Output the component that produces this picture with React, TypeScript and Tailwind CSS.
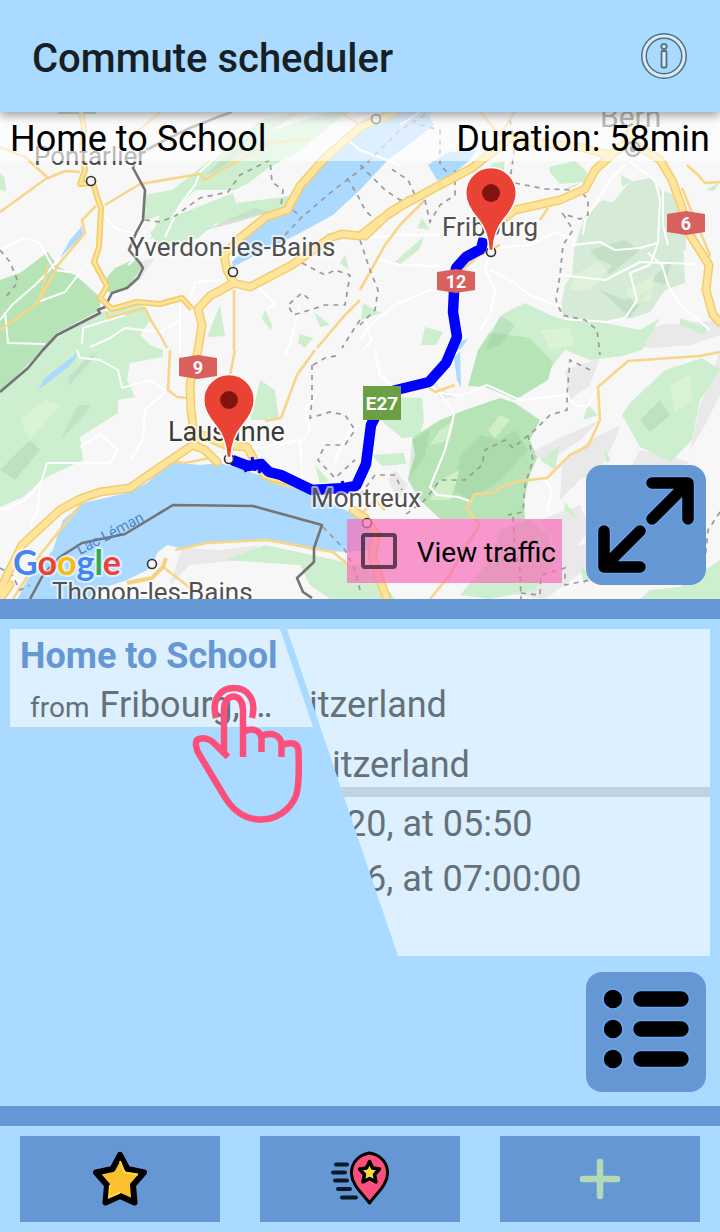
import React from "react";

const halo = {
  paintOrder: "stroke" as const,
  stroke: "#ffffff",
  strokeOpacity: 0.6,
  strokeWidth: 4,
  strokeLinejoin: "round" as const,
};

const DARK_WOODS = [
  "M0 280L20 273L48 252L58 267L75 275L100 297L100 310L57 333L43 350L0 392Z",
  "M103 282L115 268L137 258L142 267L127 288L110 293L106 290Z",
  "M490 332L530 338L553 362L548 380L515 400L505 395L485 387L468 386L478 350Z",
  "M412 438L440 420L465 410L500 398L515 403L540 420L530 440L537 458L530 475L524 500L525 519L440 519L420 500L408 480L415 455Z",
  "M562 190L580 183L575 186Z",
];

const LIGHT_WOODS = [
  "M100 312L112 310L140 300L150 320L140 335L150 345L163 350L163 357L130 363L127 380L135 397L118 400L118 413L80 437L83 460L47 477L23 497L0 507L0 393L43 352L60 335Z",
  "M143 195L172 190L195 172L210 160L250 138L290 125L330 112L350 112L325 130L298 152L268 168L250 182L235 190L195 190L180 205L165 225L150 240L160 215L142 222Z",
  "M150 232L170 218L200 206L233 193L236 203L290 196L285 208L250 216L215 224L198 238L160 250Z",
  "M240 135L262 120L300 112L280 125L262 140L225 165L195 175Z",
  "M0 173L5 178L6 192L0 189Z",
  "M265 310L272 325L271 331L262 318Z",
  "M220 305L225 336L207 337Z",
  "M314 312L330 325L320 327Z",
  "M300 334L313 338L305 348L298 343Z",
  "M260 380L275 390L279 420L250 420L255 402Z",
  "M345 255L349 270L340 263Z",
  "M395 262L424 236L419 250L400 264Z",
  "M422 218L430 230L417 228Z",
  "M492 163L505 162L505 172L488 173Z",
  "M549 167L575 161L587 172L585 182L560 184L550 172Z",
  "M621 175L632 181L622 187Z",
  "M706 190L720 182L714 191Z",
  "M363 303L381 313L361 320Z",
  "M425 327L443 332L436 345L421 345Z",
  "M490 332L503 314L525 303L550 315L565 320L600 322L640 330L660 318L642 350L623 356L590 360L565 350L545 375L525 378Z",
  "M397 397L422 398L424 420L420 436L402 438L381 420Z",
  "M372 455L404 453L406 464L382 466Z",
  "M630 403L665 370L702 358L720 370L700 400L692 440L671 462L640 447L622 415Z",
  "M315 465L330 482L320 483Z",
  "M335 560L372 570L395 599L330 599L310 585L300 565L225 560L265 545Z",
  "M565 502L578 519L564 510Z",
  "M540 460L560 445L555 470Z",
  "M588 405L598 415L583 420Z",
  "M580 565L590 575L584 585Z",
  "M650 590L680 587L720 560L720 599L640 599Z",
  "M604 448L611 460L606 463Z",
  "M680 318L706 328L705 335L680 325Z",
  "M530 519L548 535L555 560L535 590L490 599L460 595L490 560L500 530Z",
];

const RESERVES = [
  "M602 200L613 202L630 182L650 178L665 195L668 225L683 240L685 283L665 290L650 312L632 318L605 322L568 319L560 310L565 285L572 275L574 250L584 218Z",
  "M662 190L674 195L686 220L686 250L668 245Z",
];

const SHADOWS = [
  "M60 440L85 415L90 405L78 405Z",
  "M70 385L100 350L85 360L68 378Z",
  "M205 230L255 208L270 212L230 224Z",
  "M205 175L250 135L240 155L215 172Z",
  "M620 345L660 325L720 320L720 335L690 345L655 348Z",
  "M590 440L620 425L615 440L600 470L580 480L560 500L562 465Z",
  "M690 450L705 425L720 395L720 350L712 375L700 405Z",
  "M525 455L560 438L600 420L580 440L550 460Z",
  "M565 370L600 358L590 385L570 400Z",
  "M485 590L520 560L600 540L585 570L545 599Z",
  "M140 262L155 258L140 280L128 289Z",
  "M182 548L220 550L260 545L240 560L190 565L170 585Z",
  "M395 470L408 485L398 500L388 480Z",
  "M540 520L580 505L590 530L565 560Z",
  "M610 505L640 450L690 462L675 470L600 478Z",
  "M430 375L440 388L455 397L440 399Z",
];

const FACETS_DARK = [
  "M412 440L430 430L425 455L408 480Z",
  "M460 455L480 435L500 440L515 430L528 450L500 480L470 500L455 490Z",
  "M500 315L515 325L500 345L485 350Z",
  "M590 250L625 240L640 250L610 275Z",
  "M600 290L625 300L650 290L630 318Z",
  "M0 470L30 440L40 450L15 480Z",
  "M640 420L660 400L670 415L650 432Z",
  "M650 280L672 260L665 285Z",
];

const FACETS_LIGHT = [
  "M440 430L455 420L450 440L430 445Z",
  "M488 430L500 415L510 420L495 438Z",
  "M575 275L600 260L612 265L590 290L570 290Z",
  "M625 290L655 275L650 300L635 305Z",
  "M670 385L690 375L692 400L675 412Z",
  "M440 480L460 470L450 500L430 500Z",
  "M20 420L45 400L60 405L30 440Z",
  "M540 330L570 328L575 345L550 350Z",
];

const LAKES = [
  "M385 112L427 112L434 125L387 161L360 190L333 215L300 233L260 253L233 267L232 262L247 247L240 238L270 217L290 210L300 187L325 162L360 126Z",
  "M428 165L448 152L477 150L470 160L448 178L437 180Z",
  "M170 462L200 465L220 463L253 473L283 483L310 493L360 517L375 537L370 550L347 552L313 550L267 540L207 543L180 548L167 545L157 553L153 567L127 580L97 590L93 600L17 600L27 580L53 550L57 537L63 520L83 503L127 493L147 483Z",
  "M82 226L83 234L72 246L60 258L70 240Z",
  "M77 353L75 360L67 368L38 390L45 378Z",
  "M453 350L460 350L461 388L457 380Z",
  "M455 348L461 341L468 339L460 350Z",
];

const WHITE_ROADS = [
  "M0 250L25 238L40 243L50 262L55 270L75 273",
  "M0 320L12 305L35 285L45 275L60 258",
  "M5 312L8 343L45 344",
  "M103 213L115 228L135 234L145 250L128 265",
  "M35 303L65 292L82 270",
  "M82 344L83 328L125 315",
  "M90 347L110 338L125 328L160 332L180 320",
  "M165 237L180 205L195 185L200 172L218 155L225 140",
  "M77 350L80 358L100 360L118 370L122 388L150 380L166 391",
  "M166 391L145 410L143 440L130 460",
  "M80 447L100 434L118 450L110 463L47 463L42 480L25 500L5 510L0 508",
  "M40 483L38 510L30 525",
  "M180 305L180 350",
  "M220 280L195 282L190 300",
  "M255 283L275 304L265 310",
  "M360 238L400 235L440 235",
  "M300 305L290 345L285 355",
  "M360 340L370 325L395 305L430 290L450 290",
  "M372 258L400 265L440 266",
  "M490 252L485 270L495 290L490 315L480 330",
  "M497 248L530 245L555 232L575 240",
  "M490 270L510 280L530 295L550 303L562 307",
  "M572 245L600 242L615 250L640 248L658 243L660 200L655 180L630 162",
  "M658 243L650 265L630 273L637 300L625 318L607 322L565 319",
  "M648 253L662 265L668 285L680 305L710 330",
  "M663 190L663 225L668 245",
  "M583 235L585 220L610 180L625 165",
  "M375 350L380 375L395 388",
  "M363 350L372 340L365 320",
  "M432 385L445 400L454 415L445 450L430 487L437 495L458 497L472 502",
  "M437 392L460 396L487 385L520 400L565 395L575 405L587 407L598 388",
  "M545 480L552 490L547 512",
  "M460 350L450 360",
  "M300 445L310 430L305 410L320 390",
  "M230 445L260 448L300 440L303 490",
  "M335 460L350 430L360 425",
  "M505 112L508 140L505 170",
  "M400 125L420 112",
  "M560 275L605 280L640 262L695 264",
  "M330 125L360 150L400 165",
];

const MINOR_ROADS = [
  "M0 147L25 157L48 178L65 171L80 172",
  "M0 212L47 178",
  "M105 205L140 184L200 174L205 180L230 165L258 150L270 143L310 138",
  "M96 206L82 220L85 233L58 265L38 303L0 330",
  "M48 265L40 300L35 303",
  "M106 312L108 318L145 308L152 322L160 335L167 348",
  "M234 290L234 350",
  "M360 300L345 315L317 348",
  "M315 350L297 375L281 418L265 421",
  "M170 350L168 390L177 397L188 398",
  "M235 350L230 375",
  "M360 290L385 245L400 225L425 200",
  "M500 245L480 255L462 270",
  "M548 208L540 220",
  "M687 165L698 175L705 183L720 182",
  "M682 188L695 220L710 255L705 262",
  "M720 352L700 356L628 361L598 387L600 420L588 446L570 455L547 478L520 481L503 486L493 493L475 494L466 508L480 525",
  "M480 525L470 540L463 550L450 575L430 599",
  "M360 515L375 500L385 510",
  "M170 461L185 463L210 458",
  "M13 599L25 580L40 555L85 499",
  "M163 567L180 580L195 592",
  "M175 550L207 543L267 540L333 552L345 562L355 575",
  "M127 140L145 125L160 112",
  "M340 112L360 125",
  "M480 112L500 135L515 112",
  "M270 482L300 488L330 498",
  "M455 385L435 392L429 388",
];

const MAJOR_ROADS = [
  "M81 112L84 128L82 150L85 170L80 184L93 183L97 197L101 208L99 247L94 262L107 286L100 298L112 309L137 302L160 304L182 298L192 309",
  "M395 112L360 127L325 158L300 186L287 210L266 217L240 238",
  "M240 238L224 255L227 270L234 283L250 287L292 265L330 238L342 234L360 236L380 220L403 205L440 185L472 168L495 150L510 138L530 142L580 147L610 155L627 142L635 118",
  "M234 283L210 296L198 309L202 325L198 350L190 385L191 410L195 441",
  "M365 236L390 212L410 200",
  "M495 225L515 210L560 200L585 189L595 170L617 150L632 142L660 160L672 180L681 205L690 235L709 265L706 290L713 315L720 322",
  "M0 590L22 545L60 510L80 499L100 492L130 488L160 467L193 445L205 450L217 462",
  "M200 434L225 445L247 447L256 463L265 475L283 480",
  "M353 510L365 518L377 535L372 555L380 580L387 599",
  "M0 599L10 585",
];

const BORDERS = [
  "M232 112L218 117L190 128L165 140L137 155L133 168L145 190L143 220L136 233L129 250L140 263L143 268L138 278L127 288L112 293L105 307L98 310L100 313L57 335L43 350L28 368L0 392",
  "M30 599L43 575L60 557L82 543L125 534L173 505L253 506L322 525L314 548L314 562L297 578L303 592L312 598",
];

const DASHES = [
  "M145 220L160 222L175 216L200 198L228 192L240 175L270 160L272 182L283 190L281 206L290 208L302 217",
  "M285 235L302 217L330 193L360 170L400 130L430 112",
  "M347 178L357 194L365 210L380 225",
  "M0 250L10 262L18 282L5 298",
  "M302 263L325 275L335 270L350 275L345 305L325 305L310 310L293 315L288 305L302 293L310 300",
  "M360 320L350 335L342 348",
  "M360 165L385 190L400 200L415 195L408 180L390 168",
  "M425 200L430 222L440 205L455 195L455 165",
  "M360 240L370 270L378 290L375 310L360 325",
  "M420 125L440 130L440 165L450 175",
  "M515 183L545 189L580 190L588 200L588 215L580 219L563 214L573 230L563 245L560 275L556 300L562 315L585 320L597 330L600 355",
  "M510 120L515 145L510 180",
  "M360 495L375 475L395 475L402 490",
  "M312 365L312 400L310 418L330 412L345 415L355 430L345 445L325 445L318 460L335 478L355 460",
  "M313 365L325 358L340 355",
  "M590 370L570 360L567 395L567 410L550 415L535 430L525 438L513 448L505 440L485 450L482 465L465 480L440 480L425 500L405 515",
  "M528 435L533 460L525 485L523 512L508 515",
  "M513 517L515 550L520 570L521 599",
  "M720 512L708 530L705 560",
  "M521 593L540 595L541 575L565 568L565 585L590 580",
  "M323 527L345 550L355 570L360 590",
  "M0 568L12 575L20 590L30 585",
];

function Paths({ list, ...rest }: { list: string[] } & React.SVGProps<SVGPathElement>) {
  return (
    <>
      {list.map((d) => (
        <path key={d} d={d} {...rest} />
      ))}
    </>
  );
}

function Town({ x, y }: { x: number; y: number }) {
  return <circle cx={x} cy={y} r={4.5} fill="#f4f4f4" stroke="#333" strokeWidth={1.6} />;
}

function Shield({ x, y, label }: { x: number; y: number; label: string }) {
  return (
    <g transform={`translate(${x} ${y})`}>
      <path d="M-19 -9L0 -12L19 -9V9L0 12L-19 9Z" fill="#d9605f" />
      <text y={6.5} textAnchor="middle" fontSize={18} fontWeight={700} fill="#fff">
        {label}
      </text>
    </g>
  );
}

function Pin({ x, y }: { x: number; y: number }) {
  return (
    <g transform={`translate(${x} ${y})`}>
      <path
        d="M0 -25.5A25.300 25.300 0 0 0 -25.300 0C-25.300 10 -20 18 -13.500 25.500C-6 34 -2.600 43 -2 57.500H2C2.600 43 6 34 13.500 25.500C20 18 25.300 10 25.300 0A25.300 25.300 0 0 0 0 -25.500Z"
        fill="#ea4335"
        stroke="#fff"
        strokeWidth={1.5}
      />
      <circle r={9} fill="#811411" />
    </g>
  );
}

function RouteMap() {
  return (
    <svg
      className="absolute inset-0 h-full w-full"
      viewBox="0 112 720 487"
      preserveAspectRatio="xMidYMid slice"
      fontFamily="Roboto, sans-serif"
      fill="none"
      role="img"
      aria-label="Map"
    >
      <rect y={112} width={720} height={487} fill="#f7f7f7" />
      <Paths list={SHADOWS} fill="#e9e9e9" />
      <Paths list={LIGHT_WOODS} fill="#cdeecf" />
      <Paths list={RESERVES} fill="#d5ebd7" />
      <Paths list={DARK_WOODS} fill="#b6e4b7" />
      <Paths list={SHADOWS.slice(0, 4)} fill="#7f9f85" fillOpacity={0.15} />
      <Paths list={FACETS_DARK} fill="#86b98c" fillOpacity={0.22} />
      <Paths list={FACETS_LIGHT} fill="#e6f7d8" fillOpacity={0.55} />
      <Paths list={LAKES} fill="#acdaff" />
      <rect x={58} y={108} width={38} height={6} fill="#7aa95c" />
      <Paths list={WHITE_ROADS} stroke="#fff" strokeWidth={2} strokeLinejoin="round" />
      <Paths list={MINOR_ROADS} stroke="#f7d68a" strokeWidth={2.6} strokeLinejoin="round" />
      <Paths list={DASHES} stroke="#9a9a9a" strokeWidth={1.7} strokeDasharray="5 5" />
      <Paths list={BORDERS} stroke="#747474" strokeWidth={2.6} strokeLinejoin="round" />
      <Paths
        list={MAJOR_ROADS.slice(1)}
        stroke="#f4cd6b"
        strokeWidth={9}
        strokeLinejoin="round"
        strokeLinecap="round"
      />
      <path d={MAJOR_ROADS[0]} stroke="#f4cd6b" strokeWidth={6} strokeLinejoin="round" />
      <Paths
        list={MAJOR_ROADS.slice(1)}
        stroke="#fee59b"
        strokeWidth={6}
        strokeLinejoin="round"
        strokeLinecap="round"
      />
      <path d={MAJOR_ROADS[0]} stroke="#fee59b" strokeWidth={2.6} strokeLinejoin="round" />
      <path d="M127 583L152 578L163 567L166 558" stroke="#f6d27a" strokeWidth={4} />

      <path
        d="M484 238L481 249L466 257L456 268L454 292L453 312L457 337L446 363L429 382L388 392L371 425L366 464L356 486L345 488L312 490L281 475L269 472L261 464L248 466L232 460"
        stroke="#0000ff"
        strokeWidth={10.5}
        strokeLinejoin="bevel"
      />
      <path
        d="M242 460L246 472M252 457L255 471M263 459L259 473M342 481L347 494"
        stroke="#0000ff"
        strokeWidth={3}
      />

      <Town x={376} y={119} />
      <Town x={91} y={181} />
      <Town x={233} y={272} />
      <Town x={491} y={252} />
      <Town x={229} y={459} />
      <Town x={367} y={523} />
      <Town x={152} y={564} />
      <circle cx={633} cy={149} r={7} fill="#ddd" stroke="#444" strokeWidth={2} />
      <circle cx={633} cy={149} r={3} fill="#444" />

      <g fill="#515151" fontSize={26} {...halo}>
        <text x={34} y={165}>Pontarlier</text>
        <text x={129} y={256}>Yverdon-les-Bains</text>
        <text x={442} y={236}>Fribourg</text>
        <text x={311} y={507}>Montreux</text>
        <text x={52} y={601}>Thonon-les-Bains</text>
        <text x={168} y={441} fontSize={27} fill="#3a3a3a">Lausanne</text>
        <text x={600} y={127} fontSize={30}>Bern</text>
      </g>
      <text transform="translate(80 555) rotate(-28)" fontSize={15} fill="#4d86c8">
        Lac Léman
      </text>

      <Shield x={686} y={223} label="6" />
      <Shield x={456} y={281} label="12" />
      <Shield x={198} y={367} label="9" />
      <rect x={363} y={386} width={38} height={34} fill="#6b9f44" />
      <text x={382} y={410} textAnchor="middle" fontSize={19} fontWeight={700} fill="#fff">
        E27
      </text>

      <Pin x={491} y={193} />
      <Pin x={229} y={400} />

      <text x={13} y={575} fontFamily="Lato, sans-serif" fontSize={34} fontWeight={700} {...halo}>
        <tspan fill="#4285f4">G</tspan>
        <tspan fill="#ea4335">o</tspan>
        <tspan fill="#fbbc05">o</tspan>
        <tspan fill="#4285f4">g</tspan>
        <tspan fill="#34a853">l</tspan>
        <tspan fill="#ea4335">e</tspan>
      </text>
    </svg>
  );
}

function InfoIcon() {
  return (
    <svg viewBox="0 0 48 48" className="h-12 w-12" fill="none">
      <circle cx="24" cy="24" r="20" stroke="#54707f" strokeWidth="6" />
      <circle cx="24" cy="24" r="20" stroke="#d3ebfd" strokeWidth="3" />
      <rect x="21.500" y="19" width="5" height="16.500" rx="1" fill="#d3ebfd" stroke="#54707f" strokeWidth="1.800" />
      <circle cx="24" cy="14.500" r="2.700" fill="#d3ebfd" stroke="#54707f" strokeWidth="1.800" />
    </svg>
  );
}

function ExpandIcon() {
  const arrows = "M66 18H102V54M102 18L66 54M18 66V102H54M18 102L54 66";
  return (
    <svg viewBox="0 0 120 120" className="h-full w-full" fill="none" strokeLinecap="round" strokeLinejoin="round">
      <path d={arrows} stroke="#66a5f0" strokeWidth="14" />
      <path d={arrows} stroke="#000" strokeWidth="11.500" />
    </svg>
  );
}

function ListIcon() {
  return (
    <svg viewBox="0 0 120 120" className="h-full w-full" stroke="#66a5f0" strokeWidth="1.600">
      {[27, 57, 87].map((y) => (
        <g key={y}>
          <circle cx="27" cy={y} r="10" />
          <rect x="46.500" y={y - 8.5} width="57" height="17" rx="8.500" />
        </g>
      ))}
    </svg>
  );
}

function TapHand() {
  return (
    <svg
      viewBox="0 0 112 140"
      className="pointer-events-none absolute left-[182px] top-[54px] w-28"
      fill="none"
      stroke="#fd4f7b"
      strokeWidth="6.500"
      strokeLinejoin="round"
    >
      <path d="M24 35C19 16 29 5 42 5S65 16 60 35" />
      <path d="M36 74L32 70V27C32 9 51 9 51 27V74" />
      <path d="M32 70C25 64 18 52 7 56C2 57 4 66 7 71L31 111C40 127 52 137 70 136.500C90 136 104 120 105.500 106C107 96 107 82 106.500 68C106 59 98 59 90 62" />
      <path d="M51 49C60 44 69 47 69.500 56V69M69.500 53C80 48 89 53 89.500 61V74" />
    </svg>
  );
}

function StarIcon() {
  return (
    <svg viewBox="0 0 60 60" className="h-15 w-15">
      <path
        d="M30 6L37.500 20L54 23.500L43 36L44.500 53.500L30 47L15.500 53.500L17 36L6 23.500L22.500 20Z"
        fill="#fbc02d"
        stroke="#000"
        strokeWidth="6"
        strokeLinejoin="round"
      />
      <path d="M30 12L34.500 23.500L48 25.500M20 36L19 48.500L30 43.500" fill="none" stroke="#fddc35" strokeWidth="2" />
    </svg>
  );
}

function QuickPinIcon() {
  return (
    <svg viewBox="0 0 60 60" className="h-15 w-15" fill="none" strokeLinejoin="round">
      <path
        d="M39.500 4C51 6 58 14 57.500 25C57 36 47 44 39.500 54C32 44 22 36 21.500 25C21 14 28 6 39.500 4Z"
        fill="#fd4f7b"
        stroke="#000"
        strokeWidth="3"
      />
      <path
        d="M39.500 12.500L42.500 19L49.500 20L44.500 25.500L46 33L39.500 29.500L33 33L34.500 25.500L29.500 20L36.500 19Z"
        fill="#fddc35"
        stroke="#000"
        strokeWidth="3.500"
      />
      <path
        d="M6 15.500H17M3 23.500H15M5 31.500H17M8 40H20M12 48.500H26"
        stroke="#0c1926"
        strokeWidth="4"
        strokeLinecap="round"
      />
    </svg>
  );
}

function PlusIcon() {
  return (
    <svg viewBox="0 0 60 60" className="h-15 w-15" stroke="#b5d9b6" strokeWidth="6.500" strokeLinecap="round">
      <path d="M30 13V47M13 30H47" />
    </svg>
  );
}

const squareButton = "block h-30 w-30 rounded-2xl bg-[#6697d5]";
const footerButton = "flex items-center justify-center bg-[#6697d5] py-[13px]";

export default function App() {
  return (
    <div className="flex min-h-screen flex-col bg-[#aadaff] font-[Roboto,sans-serif]">
      <header className="relative z-10 flex h-28 items-center justify-between bg-[#aadaff] pl-8 pr-8 shadow-[0_3px_10px_rgba(0,0,0,0.4)]">
        <h1 className="pt-[6px] text-[40px] font-medium leading-12 text-[#171f26]">Commute scheduler</h1>
        <button type="button" aria-label="Information">
          <InfoIcon />
        </button>
      </header>

      <section className="relative flex min-h-[487px] flex-1 flex-col overflow-hidden">
        <RouteMap />
        <div className="relative flex justify-between bg-white/60 px-[10px] pt-[5px] text-4xl leading-11 text-black">
          <h2>Home to School</h2>
          <p>Duration: 58min</p>
        </div>
        <div className="absolute bottom-[14px] right-[14px] flex items-end gap-6">
          <label className="mb-[2px] flex h-16 items-center gap-5 bg-[#f66eb9]/70 px-[14px] pr-[6px] text-[28px] leading-9 text-black">
            <input type="checkbox" className="h-9 w-9 appearance-none rounded-[4px] border-4 border-black/60" />
            <span className="pt-[3px]">View traffic</span>
          </label>
          <button type="button" aria-label="Full screen map" className={squareButton}>
            <ExpandIcon />
          </button>
        </div>
      </section>

      <div className="h-5 bg-[#6697d5]" />

      <main className="flex min-h-[487px] flex-1 flex-col pt-[10px]">
        <div className="relative mx-[10px] grid items-start text-4xl leading-11 text-[#667077]">
          <div className="col-start-1 row-start-1 flex flex-col bg-[#ddf0ff] pb-[55px] pt-[54px] [clip-path:polygon(277px_0,100%_0,100%_100%,388px_100%)]">
            <div className="flex flex-col gap-4">
              <p className="pl-[299px]">itzerland</p>
              <p className="pl-[322px]">itzerland</p>
            </div>
            <div className="mb-[5px] h-[10px] bg-[#c0d2df]" />
            <div className="flex flex-col gap-[11px]">
              <p className="pl-[336px]">20, at 05:50</p>
              <p className="pl-[356px]">6, at 07:00:00</p>
            </div>
          </div>
          <article className="relative col-start-1 row-start-1 flex w-[303px] flex-col gap-[5px] bg-[#ddf0ff] pl-[10px] pt-[5px] [clip-path:polygon(0_0,270px_0,100%_100%,0_100%)]">
            <h3 className="font-bold text-[#6697d5]">Home to School</h3>
            <p className="flex items-baseline gap-[10px] pl-[10px]">
              <span className="text-[28px] leading-8">from</span>
              <span>Fribourg, …</span>
            </p>
          </article>
          <TapHand />
        </div>
        <div className="mt-4 flex justify-end pr-[14px]">
          <button type="button" aria-label="Schedule list" className={squareButton}>
            <ListIcon />
          </button>
        </div>
      </main>

      <div className="h-5 bg-[#6697d5]" />

      <footer className="grid grid-cols-3 gap-10 px-5 py-[10px]">
        <button type="button" aria-label="Favourites" className={footerButton}>
          <StarIcon />
        </button>
        <button type="button" aria-label="Quick trip" className={footerButton}>
          <QuickPinIcon />
        </button>
        <button type="button" aria-label="Add" className={footerButton}>
          <PlusIcon />
        </button>
      </footer>
    </div>
  );
}
